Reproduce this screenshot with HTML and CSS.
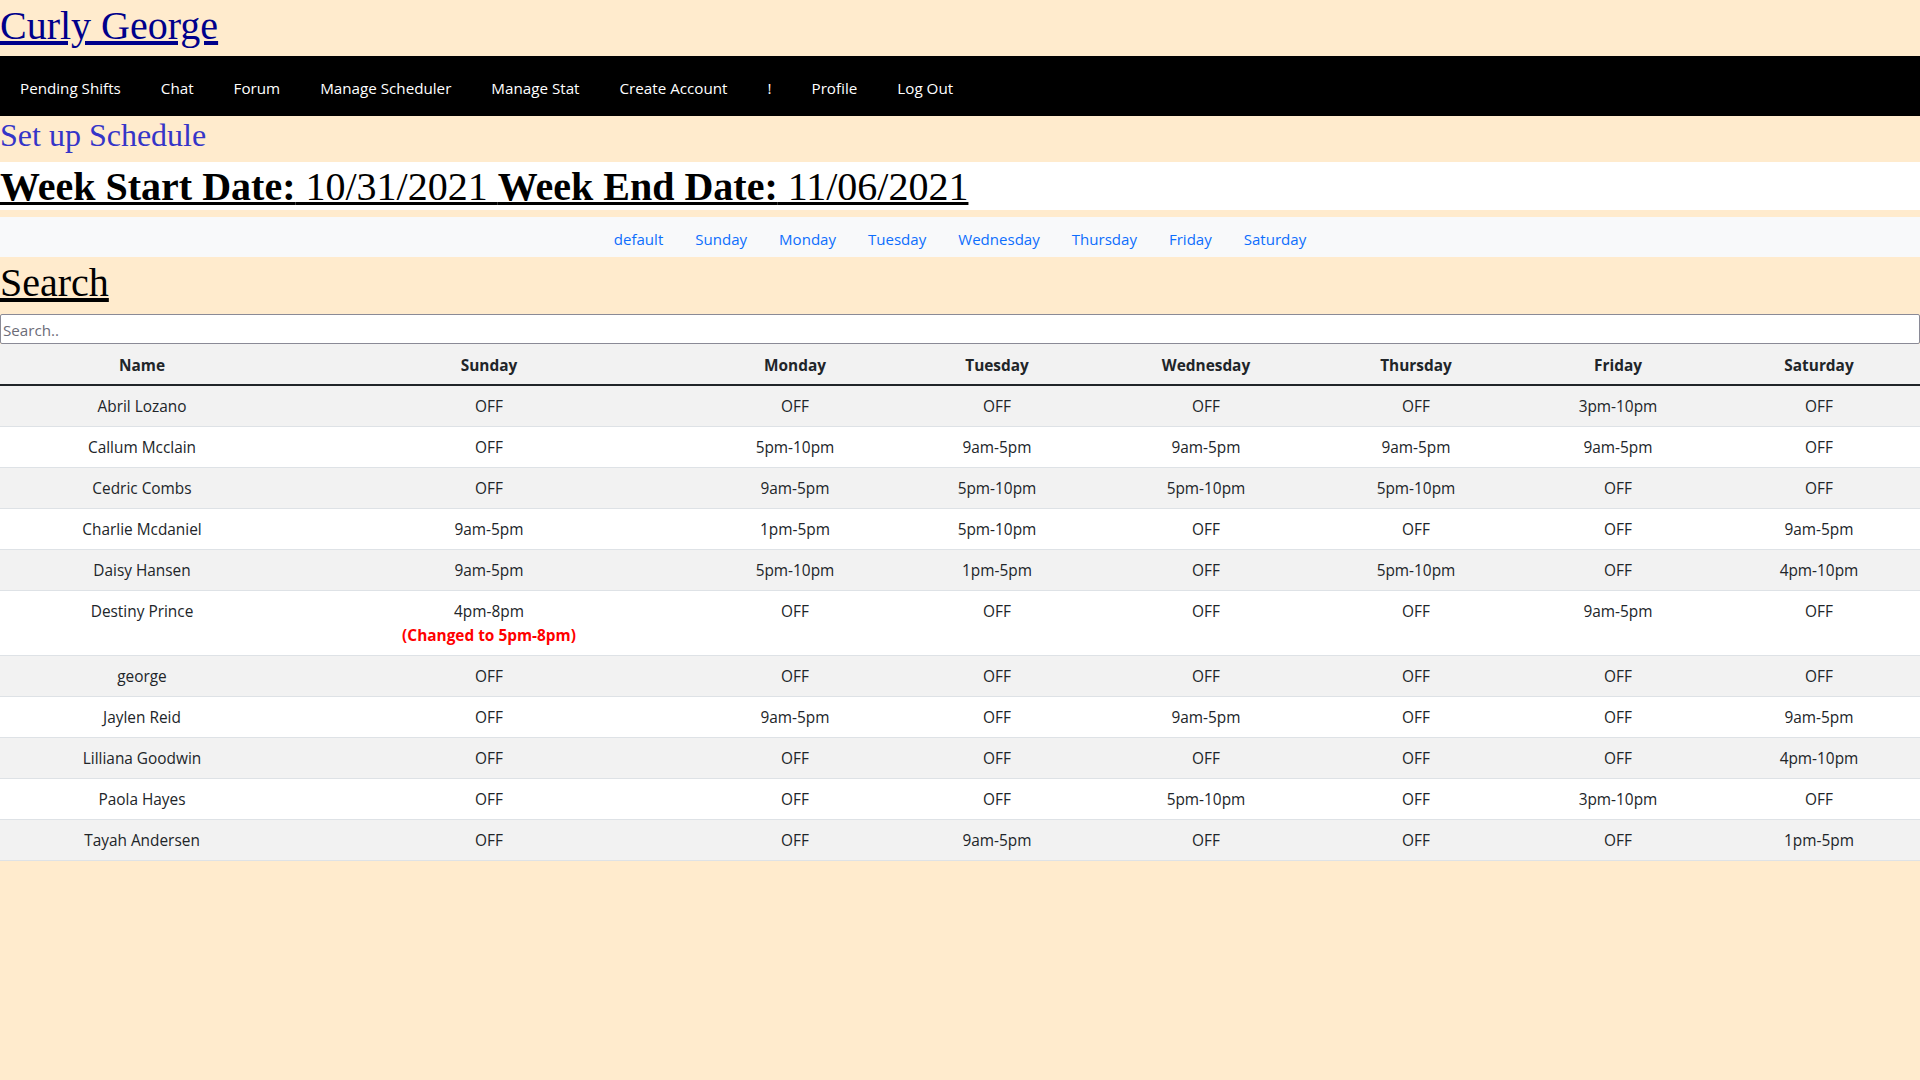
FILE: index.html
```html
<!DOCTYPE html>
<html lang="en">
<head>
<meta charset="utf-8">
<title>Set up Schedule</title>
<link rel="stylesheet" href="styles.css">
</head>
<body>
<div class="brand"><a href="#" class="brand-link">Curly George</a></div>
<nav class="topnav">
  <a href="#">Pending Shifts</a>
  <a href="#">Chat</a>
  <a href="#">Forum</a>
  <a href="#">Manage Scheduler</a>
  <a href="#">Manage Stat</a>
  <a href="#">Create Account</a>
  <a href="#">!</a>
  <a href="#">Profile</a>
  <a href="#">Log Out</a>
</nav>
<div class="subtitle">Set up Schedule</div>
<div class="week"><u><b>Week Start Date:</b> 10/31/2021 <b>Week End Date:</b> 11/06/2021</u></div>
<ul class="daynav">
  <li><a href="#">default</a></li>
  <li><a href="#">Sunday</a></li>
  <li><a href="#">Monday</a></li>
  <li><a href="#">Tuesday</a></li>
  <li><a href="#">Wednesday</a></li>
  <li><a href="#">Thursday</a></li>
  <li><a href="#">Friday</a></li>
  <li><a href="#">Saturday</a></li>
</ul>
<div class="search-title"><u>Search</u></div>
<input class="search-input" type="text" placeholder="Search..">
<table class="sched">
  <colgroup>
    <col class="c-name"><col class="c-sun"><col class="c-mon"><col class="c-tue"><col class="c-wed"><col class="c-thu"><col class="c-fri"><col class="c-sat">
  </colgroup>
  <thead>
    <tr><th>Name</th><th>Sunday</th><th>Monday</th><th>Tuesday</th><th>Wednesday</th><th>Thursday</th><th>Friday</th><th>Saturday</th></tr>
  </thead>
  <tbody>
    <tr><td>Abril Lozano</td><td>OFF</td><td>OFF</td><td>OFF</td><td>OFF</td><td>OFF</td><td>3pm-10pm</td><td>OFF</td></tr>
    <tr><td>Callum Mcclain</td><td>OFF</td><td>5pm-10pm</td><td>9am-5pm</td><td>9am-5pm</td><td>9am-5pm</td><td>9am-5pm</td><td>OFF</td></tr>
    <tr><td>Cedric Combs</td><td>OFF</td><td>9am-5pm</td><td>5pm-10pm</td><td>5pm-10pm</td><td>5pm-10pm</td><td>OFF</td><td>OFF</td></tr>
    <tr><td>Charlie Mcdaniel</td><td>9am-5pm</td><td>1pm-5pm</td><td>5pm-10pm</td><td>OFF</td><td>OFF</td><td>OFF</td><td>9am-5pm</td></tr>
    <tr><td>Daisy Hansen</td><td>9am-5pm</td><td>5pm-10pm</td><td>1pm-5pm</td><td>OFF</td><td>5pm-10pm</td><td>OFF</td><td>4pm-10pm</td></tr>
    <tr><td>Destiny Prince</td><td>4pm-8pm<br><b class="changed">(Changed to 5pm-8pm)</b></td><td>OFF</td><td>OFF</td><td>OFF</td><td>OFF</td><td>9am-5pm</td><td>OFF</td></tr>
    <tr><td>george</td><td>OFF</td><td>OFF</td><td>OFF</td><td>OFF</td><td>OFF</td><td>OFF</td><td>OFF</td></tr>
    <tr><td>Jaylen Reid</td><td>OFF</td><td>9am-5pm</td><td>OFF</td><td>9am-5pm</td><td>OFF</td><td>OFF</td><td>9am-5pm</td></tr>
    <tr><td>Lilliana Goodwin</td><td>OFF</td><td>OFF</td><td>OFF</td><td>OFF</td><td>OFF</td><td>OFF</td><td>4pm-10pm</td></tr>
    <tr><td>Paola Hayes</td><td>OFF</td><td>OFF</td><td>OFF</td><td>5pm-10pm</td><td>OFF</td><td>3pm-10pm</td><td>OFF</td></tr>
    <tr><td>Tayah Andersen</td><td>OFF</td><td>OFF</td><td>9am-5pm</td><td>OFF</td><td>OFF</td><td>OFF</td><td>1pm-5pm</td></tr>
  </tbody>
</table>
</body>
</html>
```
FILE: styles.css
```css
* { box-sizing: border-box; }
html, body {
  margin: 0;
  padding: 0;
}
body {
  background: #ffebcd;
  font-family: "Segoe UI", "Open Sans", "Noto Sans", sans-serif;
  font-size: 16px;
  line-height: 24px;
  color: #212529;
}
.brand {
  height: 56px;
  padding-top: 3px;
  font-family: "Liberation Serif", "Times New Roman", serif;
  font-size: 40px;
  line-height: 46px;
}
.brand-link {
  color: #00008b;
  text-decoration: underline;
}
.topnav {
  display: flex;
  height: 60px;
  align-items: center;
  background: #000;
}
.topnav a {
  color: #fff;
  text-decoration: none;
  padding: 4px 20px 0;
  font-size: 15.2px;
}
.subtitle {
  height: 46px;
  font-family: "Liberation Serif", "Times New Roman", serif;
  font-size: 32px;
  line-height: 38px;
  color: #3535c8;
}
.week {
  background: #fff;
  height: 48px;
  padding-top: 1px;
  font-family: "Liberation Serif", "Times New Roman", serif;
  font-size: 40px;
  line-height: 47px;
  color: #000;
}
.week u {
  text-decoration-thickness: 3px;
}
.daynav {
  list-style: none;
  margin: 7px 0 0;
  padding: 10px 0 6px;
  height: 40px;
  display: flex;
  justify-content: center;
  background: #f8f9fa;
}
.daynav a {
  display: block;
  padding: 0 16px;
  color: #0d6efd;
  text-decoration: none;
  font-size: 15.05px;
}
.search-title {
  height: 57px;
  padding-top: 3px;
  font-family: "Liberation Serif", "Times New Roman", serif;
  font-size: 40px;
  line-height: 46px;
  color: #000;
}
.search-input {
  display: block;
  width: 100%;
  height: 30px;
  margin: 0;
  padding: 2px 2px 0;
  border: 1px solid #8a8a96;
  border-radius: 2px;
  background: #fff;
  font-family: inherit;
  font-size: 15.2px;
}
.search-input::placeholder { color: #6c6c78; }
.sched {
  width: 100%;
  border-collapse: collapse;
  table-layout: fixed;
  vertical-align: top;
}
.c-name { width: 284px; }
.c-sun { width: 410px; }
.c-mon { width: 202px; }
.c-tue { width: 202px; }
.c-wed { width: 216px; }
.c-thu { width: 204px; }
.c-fri { width: 200px; }
.c-sat { width: 202px; }
.sched th, .sched td {
  text-align: center;
  padding: 9px 8px 7px;
  font-size: 15.4px;
  border-bottom: 1px solid #dee2e6;
  vertical-align: top;
}
.sched thead th {
  background: #f2f2f2;
  font-weight: 700;
  padding-top: 10px;
  padding-bottom: 6px;
  border-bottom: 2px solid #212529;
}
.sched tbody tr { background: #fff; }
.sched tbody tr:nth-child(odd) { background: #f2f2f2; }
.changed { color: #ff0000; }
```
